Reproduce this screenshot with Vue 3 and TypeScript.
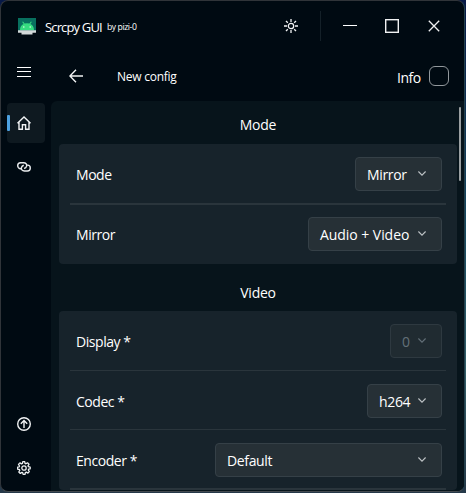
<script setup lang="ts">
interface Row {
  label: string
  value: string
  kind: string
  disabled?: boolean
}
interface Section {
  title: string
  kind: string
  rows: Row[]
}

const sections: Section[] = [
  {
    title: 'Mode',
    kind: 'mode',
    rows: [
      { label: 'Mode', value: 'Mirror', kind: 'mirror' },
      { label: 'Mirror', value: 'Audio + Video', kind: 'av' },
    ],
  },
  {
    title: 'Video',
    kind: 'video',
    rows: [
      { label: 'Display *', value: '0', kind: 'display', disabled: true },
      { label: 'Codec *', value: 'h264', kind: 'codec' },
      { label: 'Encoder *', value: 'Default', kind: 'encoder' },
    ],
  },
]
</script>

<template>
  <div class="desktop">
    <div class="window">
      <header class="titlebar">
        <svg class="logo" viewBox="0 0 18 17">
          <rect width="18" height="13" fill="#08705f" />
          <path d="M2 12C2 8.800 3.800 6.800 5.700 6L4.200 3.900l.8-.5 1.600 2.200a8 8 0 0 1 4.800 0L13 3.400l.8.500L12.300 6C14.200 6.800 16 8.800 16 12z" fill="#36dc80" />
          <circle cx="5.800" cy="9" r=".8" fill="#d8ffe6" />
          <circle cx="12.200" cy="9" r=".8" fill="#d8ffe6" />
          <path d="M0 12.300h18v2.400h-3.500v1.800h-11v-1.800H0z" fill="#d2d8d9" />
        </svg>
        <span class="app-name">Scrcpy GUI</span>
        <span class="author">by pizi-0</span>
        <svg class="sun" viewBox="0 0 14 14" fill="none" stroke="#f2f4f5" stroke-width="1.3">
          <circle cx="7" cy="7" r="2.700" />
          <path d="M7 0v3M7 11v3M0 7h3M11 7h3M2 2l1.800 1.800M10.200 10.200 12 12M2 12l1.800-1.800M10.200 3.800 12 2" />
        </svg>
        <i class="sep"></i>
        <svg class="caption min" viewBox="0 0 14 14"><path d="M0 6.500h14" stroke="#fff" /></svg>
        <svg class="caption max" viewBox="0 0 14 14"><rect x=".7" y=".7" width="12.600" height="12.600" fill="none" stroke="#f0f1f2" stroke-width="1.400" /></svg>
        <svg class="caption close" viewBox="0 0 14 14"><path d="m1.800 1.800 10.400 10.400M12.200 1.800 1.800 12.200" stroke="#f0f1f2" stroke-width="1.300" /></svg>
      </header>
      <div class="body">
        <nav class="sidebar">
          <button class="nav menu" aria-label="Menu">
            <svg viewBox="0 0 14 14"><path d="M0 2.500h14M0 6.500h14M0 11.500h14" stroke="#fff" /></svg>
          </button>
          <button class="nav home" aria-label="Home">
            <svg viewBox="0 0 14 14" fill="none" stroke="#f1f3f4" stroke-width="1.400">
              <path d="M.5 7.200 7 1l6.500 6.200M2 6v7.200h3.400V8.700h3.200v4.500H12V6" />
            </svg>
          </button>
          <button class="nav link" aria-label="Connection">
            <svg viewBox="0 0 14 14" fill="none" stroke="#e9ecee" stroke-width="1.400">
              <path d="M4.800 8.700H3.600C1.900 8.700.7 7.200.7 5.700s1.200-3 2.900-3h3c2.200 0 3.500 1.700 3 3.500-.4 1.300-1.300 2-2.500 2.300" />
              <path d="M9.800 5.100h.8c1.700 0 2.700 1.400 2.700 2.900s-1.200 3-2.900 3h-3c-2.200 0-3.500-1.700-3-3.500.4-1.300 1.200-2 2.400-2.300" />
            </svg>
          </button>
          <span class="grow"></span>
          <button class="nav update" aria-label="Update">
            <svg viewBox="0 0 14 14" fill="none" stroke="#f1f3f4" stroke-width="1.400">
              <circle cx="7" cy="7" r="6.300" /><path d="M7 11V3.500M3.800 6.700 7 3.500l3.200 3.200" />
            </svg>
          </button>
          <button class="nav settings" aria-label="Settings">
            <svg viewBox="0 0 14 14" fill="none" stroke="#eceff0" stroke-width="1.300" stroke-linejoin="round">
              <circle cx="7" cy="7" r="2.200" />
              <path d="m5.800.7-.4 1.800-.9.400-1.600-1-1.400 1.500 1 1.600-.3.800-1.600.4v1.900l1.800.4.400.9-1 1.600 1.500 1.400 1.600-1 .8.300.4 1.600h1.900l.4-1.800.9-.4 1.600 1 1.400-1.500-1-1.600.3-.8 1.600-.4V6.100l-1.800-.4-.4-.9 1-1.600-1.500-1.400-1.600 1-.8-.3-.4-1.800z" />
            </svg>
          </button>
        </nav>
        <main class="main">
          <div class="toolbar">
            <svg class="back" viewBox="0 0 14 14" fill="none" stroke="#f1f3f4" stroke-width="1.400"><path d="M14 7H1M7 .8.900 7 7 13.200" /></svg>
            <span class="config">New config</span>
            <span class="info">Info</span>
            <span class="checkbox"></span>
          </div>
          <div class="panel">
            <div class="scroll">
              <section v-for="s in sections" :key="s.title" :class="'section-' + s.kind">
                <h2>{{ s.title }}</h2>
                <div class="card">
                  <div v-for="r in s.rows" :key="r.label" class="row">
                    <span class="label">{{ r.label }}</span>
                    <span class="select" :class="[r.kind, { disabled: r.disabled }]">
                      <span class="value">{{ r.value }}</span>
                      <svg class="chevron" viewBox="0 0 8 5"><path d="m.4.500 3.600 3.600L7.600.500" fill="none" stroke="currentColor" stroke-width="1.100" /></svg>
                    </span>
                  </div>
                </div>
              </section>
            </div>
            <i class="scrollbar"></i>
          </div>
        </main>
      </div>
    </div>
  </div>
</template>

<style>
body {
  margin: 0;
  background: #15232d;
}
</style>

<style scoped>
* {
  box-sizing: border-box;
}
.desktop {
  width: 466px;
  height: 493px;
  overflow: hidden;
  background: linear-gradient(180deg, #071947, #164a61 45%, #34616a 75%, #253849);
}
.window {
  display: flex;
  flex-direction: column;
  width: 465px;
  height: 492px;
  border: 1px solid #303439;
  border-right-color: #24404c;
  border-bottom-color: #444a4f;
  border-radius: 8px;
  overflow: hidden;
  background: #000a12;
  color: #fff;
  font-family: "Open Sans", "Noto Sans", sans-serif;
  font-size: 14px;
}
.titlebar {
  flex: none;
  display: flex;
  align-items: center;
  height: 50px;
  padding-left: 17px;
}
.logo {
  width: 18px;
  height: 17px;
  margin-right: 9px;
}
.app-name {
  width: 62px;
  margin-top: 1px;
  font-size: 13px;
  letter-spacing: -0.85px;
  white-space: nowrap;
}
.author {
  width: 39px;
  margin-top: 2px;
  font-size: 8.6px;
  letter-spacing: -0.4px;
  white-space: nowrap;
}
.sun {
  width: 14px;
  height: 14px;
  margin-left: 138px;
}
.sep {
  width: 1px;
  height: 30px;
  margin-left: 22px;
  background: #142028;
}
.caption {
  width: 14px;
  height: 14px;
}
.min {
  margin-left: 22px;
}
.max,
.close {
  margin-left: 28px;
}
.body {
  flex: 1;
  min-height: 0;
  display: flex;
}
.sidebar {
  flex: none;
  display: flex;
  flex-direction: column;
  width: 50px;
  padding: 1px 0 3px 6px;
}
.nav {
  flex: none;
  display: flex;
  align-items: center;
  justify-content: center;
  width: 38px;
  height: 40px;
  padding: 0 4px 0 0;
  border: 0;
  border-radius: 4px;
  background: transparent;
}
.nav svg {
  width: 14px;
  height: 14px;
}
.home {
  margin-top: 11px;
  position: relative;
  background: #0e1920;
}
.home::before {
  content: "";
  position: absolute;
  left: 0;
  top: 12px;
  width: 3px;
  height: 16px;
  border-radius: 1px;
  background: #4ca0e0;
}
.link,
.settings {
  margin-top: 4px;
}
.grow {
  flex: 1;
}
.main {
  flex: 1;
  min-width: 0;
  display: flex;
  flex-direction: column;
}
.toolbar {
  flex: none;
  display: flex;
  align-items: center;
  height: 50px;
  padding-left: 18px;
}
.back {
  width: 14px;
  height: 14px;
}
.config {
  width: 62px;
  margin-left: 34px;
  margin-top: 1px;
  font-size: 12px;
  letter-spacing: -0.25px;
  white-space: nowrap;
}
.info {
  width: 24px;
  margin-left: 218px;
  margin-top: 2px;
  letter-spacing: -0.5px;
}
.checkbox {
  width: 20px;
  height: 20px;
  margin-left: 8px;
  border: 1px solid #92989c;
  border-radius: 6px;
}
.panel {
  flex: 1;
  min-height: 0;
  display: flex;
  border-radius: 6px 0 0 0;
  background: #07141b;
}
.scroll {
  flex: none;
  width: 406px;
  padding-left: 8px;
  overflow: hidden;
}
h2 {
  display: flex;
  align-items: center;
  justify-content: center;
  height: 47px;
  margin: 0;
  padding-top: 9px;
  font-size: 14px;
  font-weight: 400;
  letter-spacing: -0.25px;
}
.section-mode h2 {
  height: 43px;
  padding-top: 4px;
}
.card {
  padding: 0 11px;
  border-radius: 4px;
  background: #17232b;
}
.row {
  display: flex;
  align-items: center;
  justify-content: space-between;
  height: 59px;
  padding: 1px 4px 0 6px;
  border-bottom: 1px solid #2a353c;
}
.section-mode .row {
  height: 61px;
  padding-top: 1px;
  border-bottom-width: 2px;
}
.section-mode .row:last-child {
  height: 59px;
  padding: 0 4px 2px 6px;
  border-bottom: 0;
}
.section-video .row:first-child {
  height: 60px;
}
.section-video .row:last-child {
  height: 60px;
  border-bottom-width: 2px;
}
.label {
  margin-top: 1px;
  letter-spacing: -0.45px;
  white-space: nowrap;
}
.select {
  display: flex;
  align-items: center;
  justify-content: space-between;
  height: 34px;
  padding: 0 15px 0 11px;
  border: 1px solid #354047;
  border-radius: 4px;
  background: #263036;
  letter-spacing: -0.35px;
  white-space: nowrap;
}
.mirror { width: 87px; }
.av { width: 134px; letter-spacing: -0.05px; }
.display { width: 52px; }
.codec { width: 75px; }
.encoder { width: 227px; }
.value {
  margin-top: 1px;
}
.chevron {
  flex: none;
  width: 8px;
  height: 5px;
  margin-top: -1px;
  color: #bec3c6;
}
.disabled {
  border-color: #2e3940;
  background: #202b31;
  color: #637078;
}
.disabled .chevron {
  color: #637078;
}
.scrollbar {
  width: 2px;
  height: 74px;
  margin: 6px 0 0 2px;
  border-radius: 1px;
  background: #9ba0a2;
}
</style>
